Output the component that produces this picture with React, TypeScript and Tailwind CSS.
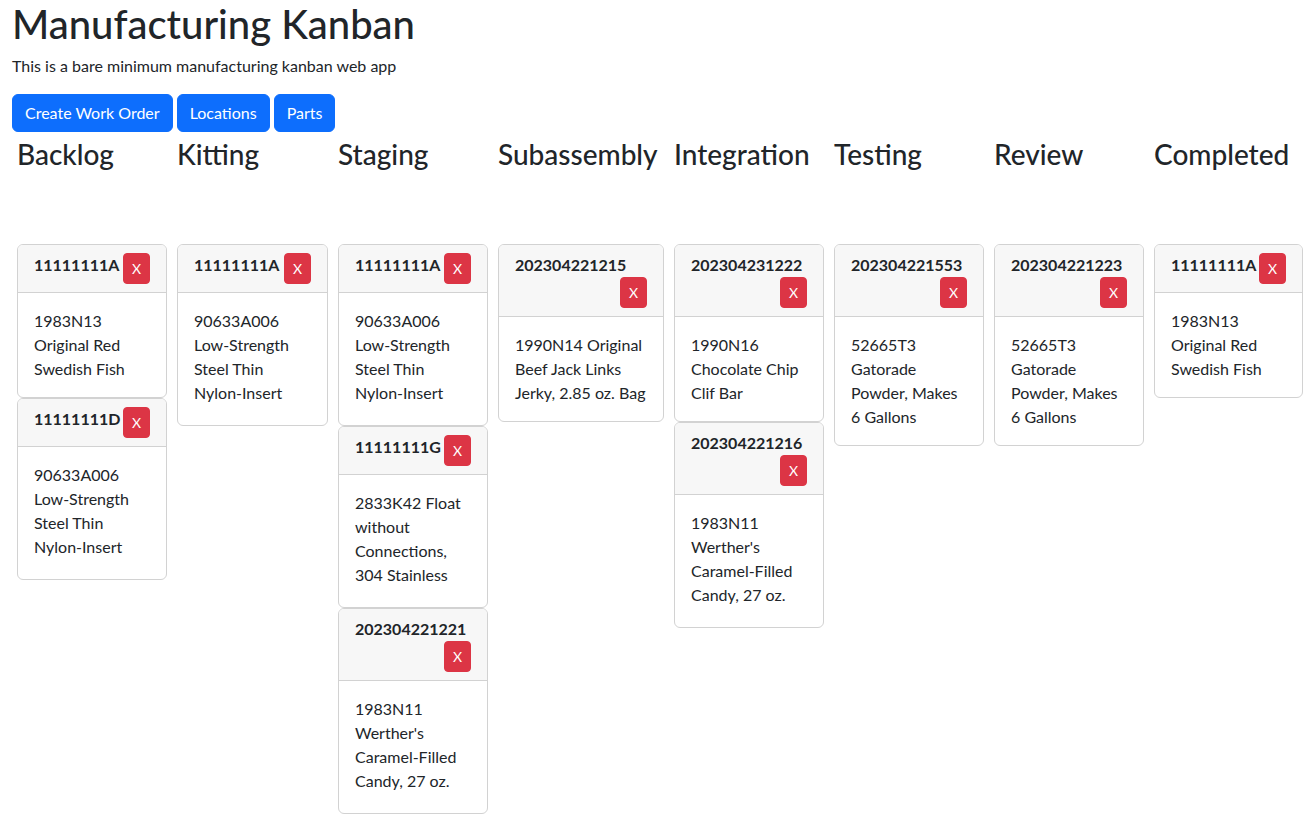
import React from 'react';

interface Part {
  text: string;
  // some descriptions render a few px taller in the original app
  loose?: boolean;
}

interface WorkOrder {
  id: string;
  part: Part;
}

interface Column {
  title: string;
  width: string;
  orders: WorkOrder[];
}

const SWEDISH_FISH: Part = { text: '1983N13 Original Red Swedish Fish' };
const NYLON_INSERT: Part = { text: '90633A006 Low-Strength Steel Thin Nylon-Insert', loose: true };
const FLOAT: Part = { text: '2833K42 Float without Connections, 304 Stainless', loose: true };
const WERTHERS: Part = { text: "1983N11 Werther's Caramel-Filled Candy, 27 oz.", loose: true };
const JERKY: Part = { text: '1990N14 Original Beef Jack Links Jerky, 2.85 oz. Bag' };
const CLIF_BAR: Part = { text: '1990N16 Chocolate Chip Clif Bar' };
const GATORADE: Part = { text: '52665T3 Gatorade Powder, Makes 6 Gallons' };

const columns: Column[] = [
  {
    title: 'Backlog',
    width: 'w-[160px]',
    orders: [
      { id: '11111111A', part: SWEDISH_FISH },
      { id: '11111111D', part: NYLON_INSERT },
    ],
  },
  { title: 'Kitting', width: 'w-[161px]', orders: [{ id: '11111111A', part: NYLON_INSERT }] },
  {
    title: 'Staging',
    width: 'w-[160px]',
    orders: [
      { id: '11111111A', part: NYLON_INSERT },
      { id: '11111111G', part: FLOAT },
      { id: '202304221221', part: WERTHERS },
    ],
  },
  { title: 'Subassembly', width: 'w-[176px]', orders: [{ id: '202304221215', part: JERKY }] },
  {
    title: 'Integration',
    width: 'w-[160px]',
    orders: [
      { id: '202304231222', part: CLIF_BAR },
      { id: '202304221216', part: WERTHERS },
    ],
  },
  { title: 'Testing', width: 'w-[160px]', orders: [{ id: '202304221553', part: GATORADE }] },
  { title: 'Review', width: 'w-[160px]', orders: [{ id: '202304221223', part: GATORADE }] },
  { title: 'Completed', width: 'w-[159px]', orders: [{ id: '11111111A', part: SWEDISH_FISH }] },
];

const OrderCard: React.FC<{ order: WorkOrder }> = ({ order }) => (
  <div className="rounded-[6px] border border-[#d2d2d2] bg-white">
    {/* Header */}
    <div className="flex flex-wrap items-start rounded-t-[5px] border-b border-[#d2d2d2] bg-[#f7f7f7] px-4 py-2">
      <span className="font-bold leading-6">{order.id}</span>
      <button className="ml-auto rounded-[4px] border border-[#dc3545] bg-[#dc3545] px-2 py-1 text-sm leading-[21px] text-white">
        X
      </button>
    </div>
    {/* Body */}
    <div className={order.part.loose ? 'px-4 pt-4 pb-5 leading-6' : 'p-4 leading-6'}>
      {order.part.text}
    </div>
  </div>
);

export default function App() {
  return (
    <div className="min-h-screen bg-white px-3 font-[Lato,sans-serif] text-base text-[#212529]">
      <h1 className="mb-[6px] text-[40px] font-medium leading-[48px]">Manufacturing Kanban</h1>
      <p className="mb-4 leading-6">This is a bare minimum manufacturing kanban web app</p>

      <div className="flex gap-1">
        {['Create Work Order', 'Locations', 'Parts'].map((label) => (
          <button
            key={label}
            className="rounded-[6px] border border-[#0d6efd] bg-[#0d6efd] px-3 py-[6px] leading-6 text-white"
          >
            {label}
          </button>
        ))}
      </div>

      {/* Board */}
      <div className="mt-[6px] flex">
        {columns.map((col) => (
          <div key={col.title} className={`${col.width} shrink-0 px-[5px]`}>
            <h3 className="mb-[72px] whitespace-nowrap text-[28px] font-medium leading-[33.6px]">
              {col.title}
            </h3>
            <div className="flex flex-col">
              {col.orders.map((order, i) => (
                <OrderCard key={`${order.id}-${i}`} order={order} />
              ))}
            </div>
          </div>
        ))}
      </div>
    </div>
  );
}
